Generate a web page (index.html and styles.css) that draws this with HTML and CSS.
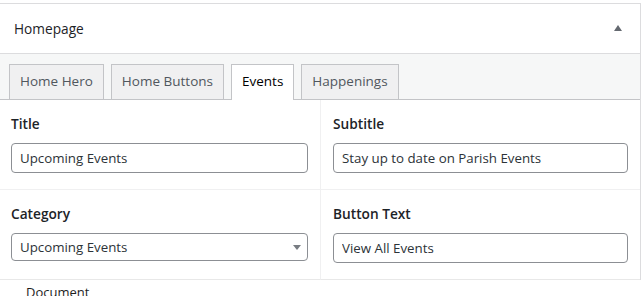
FILE: index.html
```html
<!DOCTYPE html>
<html lang="en">
<head>
    <meta charset="UTF-8">
    <title>Homepage fields</title>
    <link rel="stylesheet" href="styles.css">
</head>
<body>
    <!-- Homepage meta box -->
    <div class="metabox">
        <div class="metabox-header">
            <h2 class="metabox-title">Homepage</h2>
            <svg class="toggle" width="8" height="6" viewBox="0 0 8 6"><path d="M4 0 L8 6 L0 6 Z" fill="#646970"/></svg>
        </div>

        <!-- Tabs -->
        <div class="tabs">
            <div class="tab">Home Hero</div>
            <div class="tab">Home Buttons</div>
            <div class="tab active">Events</div>
            <div class="tab">Happenings</div>
        </div>

        <!-- Fields -->
        <div class="fields">
            <div class="field">
                <label class="field-label">Title</label>
                <input class="field-input" type="text" value="Upcoming Events">
            </div>
            <div class="field">
                <label class="field-label">Subtitle</label>
                <input class="field-input" type="text" value="Stay up to date on Parish Events">
            </div>
            <div class="field">
                <label class="field-label">Category</label>
                <div class="select-wrap">
                    <select class="field-select">
                        <option>Upcoming Events</option>
                    </select>
                </div>
            </div>
            <div class="field">
                <label class="field-label">Button Text</label>
                <input class="field-input" type="text" value="View All Events">
            </div>
        </div>
    </div>

    <div class="doc-tab">Document</div>
</body>
</html>
```

FILE: styles.css
```css
/* General Reset */
* {
    margin: 0;
    padding: 0;
    box-sizing: border-box;
}

body {
    font-family: 'Open Sans', 'Noto Sans', sans-serif;
    font-size: 13.5px;
    color: #1e1e1e;
    background: #fff;
    overflow: hidden;
}

/* Meta box frame */
.metabox {
    margin: 3px 0 0 -1px;
    width: 642px;
    border: 1px solid #dcdcde;
    border-bottom: none;
    background: #fff;
}

.metabox-header {
    height: 50px;
    display: flex;
    align-items: center;
    justify-content: space-between;
    padding: 0 18px 0 14px;
    border-bottom: 1px solid #dcdcde;
}

.metabox-title {
    font-size: 13.7px;
    font-weight: 400;
    color: #1d2327;
}

.toggle {
    margin-top: -2px;
}

/* Tabs */
.tabs {
    display: flex;
    align-items: flex-start;
    gap: 7px;
    padding: 10px 0 0 9px;
    background: #f6f7f7;
    border-bottom: 1px solid #c3c4c7;
}

.tab {
    height: 35px;
    line-height: 33px;
    padding: 0 10px;
    border: 1px solid #c3c4c7;
    border-bottom: none;
    background: #f0f0f1;
    color: #50575e;
}

.tab.active {
    height: 36px;
    margin-bottom: -1px;
    background: #fff;
    color: #000;
}

/* Field grid */
.fields {
    display: grid;
    grid-template-columns: 321px 1fr;
}

.field {
    padding: 14px 12px 16px 12px;
    border-bottom: 1px solid #f0f0f1;
}

.field:nth-child(odd) {
    padding-left: 11px;
    border-right: 1px solid #f0f0f1;
}

.field:nth-last-child(-n+2) {
    border-bottom-color: #e8e8e8;
}

.field-label {
    display: block;
    font-weight: 600;
    font-size: 13.7px;
    line-height: 20px;
    margin-bottom: 9px;
    color: #1d2327;
}

.field-input,
.field-select {
    display: block;
    width: 100%;
    height: 30px;
    padding: 0 8px;
    font-family: inherit;
    font-size: 13.3px;
    color: #2c3338;
    background: #fff;
    border: 1px solid #8c8f94;
    border-radius: 4px;
    outline: none;
}

.select-wrap {
    position: relative;
}

.field-select {
    height: 28px;
    appearance: none;
    -webkit-appearance: none;
}

/* dropdown arrow */
.select-wrap::after {
    content: "";
    position: absolute;
    right: 7px;
    top: 12px;
    border-left: 4px solid transparent;
    border-right: 4px solid transparent;
    border-top: 5px solid #787c82;
}

.doc-tab {
    padding: 2px 0 0 26px;
    font-size: 13px;
    line-height: 20px;
    color: #1e1e1e;
}
```
